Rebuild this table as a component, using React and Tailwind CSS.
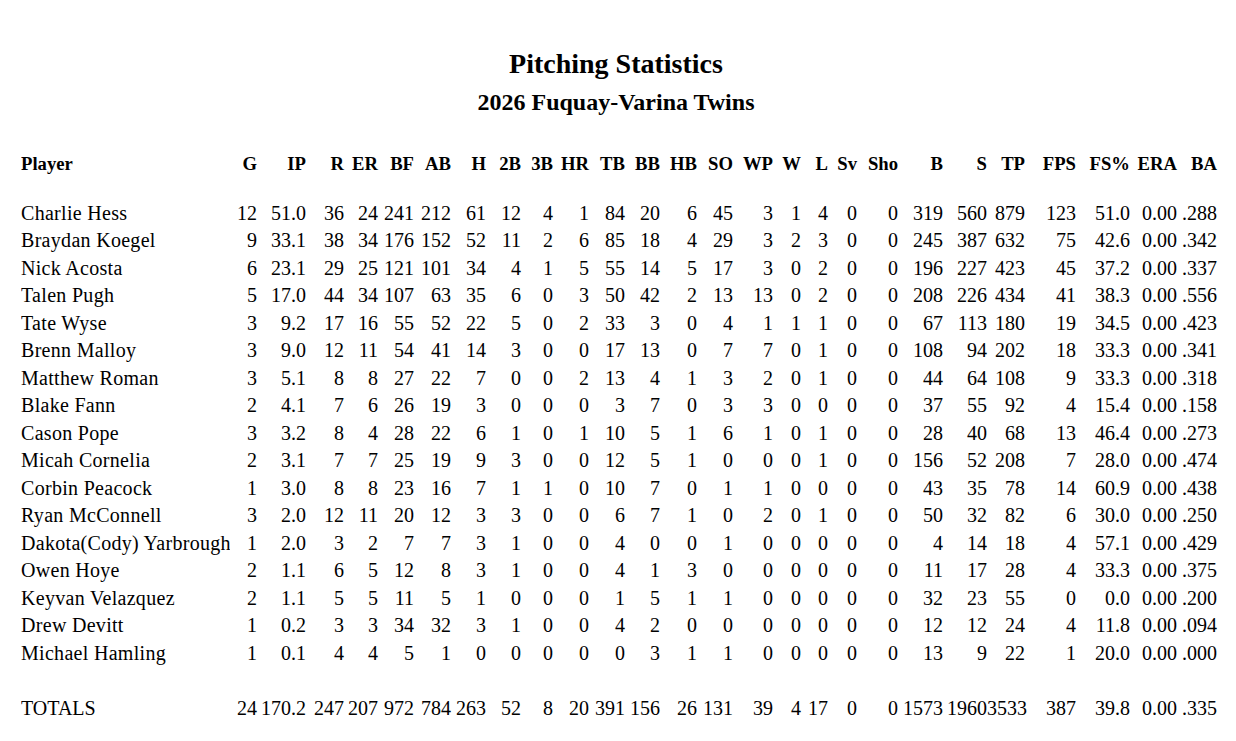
import React from "react";

const columns = [
  { key: "G", w: "w-[25px]" },
  { key: "IP", w: "w-[49px]" },
  { key: "R", w: "w-[38px]" },
  { key: "ER", w: "w-[34px]" },
  { key: "BF", w: "w-[36px]" },
  { key: "AB", w: "w-[37px]" },
  { key: "H", w: "w-[35px]" },
  { key: "2B", w: "w-[35px]" },
  { key: "3B", w: "w-[32px]" },
  { key: "HR", w: "w-[36px]" },
  { key: "TB", w: "w-[36px]" },
  { key: "BB", w: "w-[35px]" },
  { key: "HB", w: "w-[37px]" },
  { key: "SO", w: "w-[36px]" },
  { key: "WP", w: "w-[40px]" },
  { key: "W", w: "w-[28px]" },
  { key: "L", w: "w-[27px]" },
  { key: "Sv", w: "w-[29px]" },
  { key: "Sho", w: "w-[41px]" },
  { key: "B", w: "w-[45px]" },
  { key: "S", w: "w-[44px]" },
  { key: "TP", w: "w-[38px]" },
  { key: "FPS", w: "w-[51px]" },
  { key: "FS%", w: "w-[54px]" },
  { key: "ERA", w: "w-[47px]" },
  { key: "BA", w: "w-[40px]" },
];

const pitchers = [
  ["Charlie Hess", "12 51.0 36 24 241 212 61 12 4 1 84 20 6 45 3 1 4 0 0 319 560 879 123 51.0 0.00 .288"],
  ["Braydan Koegel", "9 33.1 38 34 176 152 52 11 2 6 85 18 4 29 3 2 3 0 0 245 387 632 75 42.6 0.00 .342"],
  ["Nick Acosta", "6 23.1 29 25 121 101 34 4 1 5 55 14 5 17 3 0 2 0 0 196 227 423 45 37.2 0.00 .337"],
  ["Talen Pugh", "5 17.0 44 34 107 63 35 6 0 3 50 42 2 13 13 0 2 0 0 208 226 434 41 38.3 0.00 .556"],
  ["Tate Wyse", "3 9.2 17 16 55 52 22 5 0 2 33 3 0 4 1 1 1 0 0 67 113 180 19 34.5 0.00 .423"],
  ["Brenn Malloy", "3 9.0 12 11 54 41 14 3 0 0 17 13 0 7 7 0 1 0 0 108 94 202 18 33.3 0.00 .341"],
  ["Matthew Roman", "3 5.1 8 8 27 22 7 0 0 2 13 4 1 3 2 0 1 0 0 44 64 108 9 33.3 0.00 .318"],
  ["Blake Fann", "2 4.1 7 6 26 19 3 0 0 0 3 7 0 3 3 0 0 0 0 37 55 92 4 15.4 0.00 .158"],
  ["Cason Pope", "3 3.2 8 4 28 22 6 1 0 1 10 5 1 6 1 0 1 0 0 28 40 68 13 46.4 0.00 .273"],
  ["Micah Cornelia", "2 3.1 7 7 25 19 9 3 0 0 12 5 1 0 0 0 1 0 0 156 52 208 7 28.0 0.00 .474"],
  ["Corbin Peacock", "1 3.0 8 8 23 16 7 1 1 0 10 7 0 1 1 0 0 0 0 43 35 78 14 60.9 0.00 .438"],
  ["Ryan McConnell", "3 2.0 12 11 20 12 3 3 0 0 6 7 1 0 2 0 1 0 0 50 32 82 6 30.0 0.00 .250"],
  ["Dakota(Cody) Yarbrough", "1 2.0 3 2 7 7 3 1 0 0 4 0 0 1 0 0 0 0 0 4 14 18 4 57.1 0.00 .429"],
  ["Owen Hoye", "2 1.1 6 5 12 8 3 1 0 0 4 1 3 0 0 0 0 0 0 11 17 28 4 33.3 0.00 .375"],
  ["Keyvan Velazquez", "2 1.1 5 5 11 5 1 0 0 0 1 5 1 1 0 0 0 0 0 32 23 55 0 0.0 0.00 .200"],
  ["Drew Devitt", "1 0.2 3 3 34 32 3 1 0 0 4 2 0 0 0 0 0 0 0 12 12 24 4 11.8 0.00 .094"],
  ["Michael Hamling", "1 0.1 4 4 5 1 0 0 0 0 0 3 1 1 0 0 0 0 0 13 9 22 1 20.0 0.00 .000"],
];

const totals = "24 170.2 247 207 972 784 263 52 8 20 391 156 26 131 39 4 17 0 0 1573 1960 3533 387 39.8 0.00 .335";

// one line of the report: name on the left, numbers right-aligned in fixed columns
const Row = ({ name, values, className = "", nameClass = "" }) => (
  <div className={`flex h-[27.5px] pl-[21px] leading-[27.5px] ${className}`}>
    <div className="w-[211px] shrink-0">
      <div className={`w-[209px] overflow-hidden whitespace-nowrap ${nameClass}`}>{name}</div>
    </div>
    {columns.map((col, i) => (
      <div key={col.key} className={`shrink-0 whitespace-nowrap text-right ${col.w}`}>
        {values[i]}
      </div>
    ))}
  </div>
);

export default function App() {
  return (
    <div className="min-h-[741px] w-full bg-white font-['Liberation_Serif',serif] text-black">
      <div className="pt-[50px] pr-[4px] text-center font-bold">
        <h1 className="text-[28px] leading-[28px]">Pitching Statistics</h1>
        <h2 className="mt-[11.5px] text-[24px] leading-[24px]">2026 Fuquay-Varina Twins</h2>
      </div>

      <Row
        name="Player"
        values={columns.map((c) => c.key)}
        className="mt-[36px] text-[18.67px] font-bold"
      />

      <div className="mt-[22.5px] text-[20px]">
        {pitchers.map(([name, line]) => (
          <Row key={name} name={name} values={line.split(" ")} nameClass="tracking-[0.3px]" />
        ))}
        <Row name="TOTALS" values={totals.split(" ")} className="mt-[28px]" />
      </div>
    </div>
  );
}
